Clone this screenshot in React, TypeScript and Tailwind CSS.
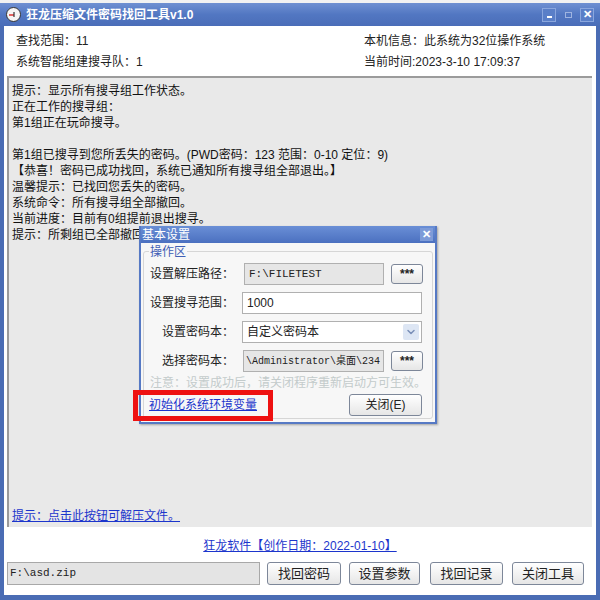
import { ChevronDown } from "lucide-react";

const font = "font-['Liberation_Sans','Noto_Sans_CJK_SC',sans-serif]";
const mono = "font-['Liberation_Mono','Noto_Sans_CJK_SC',monospace]";

const logLines = [
  "提示：显示所有搜寻组工作状态。",
  "正在工作的搜寻组：",
  "第1组正在玩命搜寻。",
  "",
  "第1组已搜寻到您所丢失的密码。(PWD密码：123 范围：0-10 定位：9)",
  "【恭喜！密码已成功找回，系统已通知所有搜寻组全部退出。】",
  "温馨提示：已找回您丢失的密码。",
  "系统命令：所有搜寻组全部撤回。",
  "当前进度：目前有0组提前退出搜寻。",
  "提示：所剩组已全部撤回。",
];

function SmallBtn({ label, className = "" }: { label: string; className?: string }) {
  return (
    <button
      className={`flex items-center justify-center rounded-[3px] border border-[#7d8799] bg-gradient-to-b from-white to-[#e6e6e6] text-[12px] text-[#222] ${className}`}
    >
      {label}
    </button>
  );
}

function SettingsDialog() {
  return (
    <div className="absolute left-[139px] top-[226px] flex h-[198px] w-[298px] flex-col border-[2px] border-t-0 border-[#5679c4] bg-[#f7f7f7] shadow-[1px_1px_2px_rgba(0,0,0,0.3)]">
      <div className="flex h-[17px] shrink-0 items-center justify-between bg-gradient-to-b from-[#6a8fd6] to-[#4b70c0] pl-[1px] pr-[2px] text-[12px] text-white">
        <span>基本设置</span>
        <span className="flex h-[13px] w-[13px] items-center justify-center bg-[#7d9bd8] text-[11px] font-bold leading-none">✕</span>
      </div>
      <div className="relative mx-[2px] mb-[3px] mt-[8px] flex-1 rounded-[3px] border border-[#d6d6d6] px-[6px] pt-[11px]">
        <span className="absolute -top-[8px] left-[5px] bg-[#f7f7f7] px-[1px] text-[12px] leading-[16px] text-[#3f5fb5]">操作区</span>
        <div className="flex flex-col gap-[7px] text-[12px] text-[#222]">
          <div className="flex h-[22px] items-center">
            <span className="w-[94px]">设置解压路径：</span>
            <div className={`flex h-[22px] w-[140px] items-center border border-[#b0b0b0] bg-[#e6e6e6] px-[4px] text-[11px] ${mono}`}>F:\FILETEST</div>
            <SmallBtn label="***" className="ml-[7px] h-[20px] w-[32px] font-bold text-[10px]" />
          </div>
          <div className="flex h-[22px] items-center">
            <span className="w-[92px]">设置搜寻范围：</span>
            <div className="flex h-[22px] w-[180px] items-center border border-[#b0b0b0] bg-white px-[4px]">1000</div>
          </div>
          <div className="flex h-[22px] items-center">
            <span className="w-[92px] pl-[12px]">设置密码本：</span>
            <div className="flex h-[22px] w-[180px] items-center justify-between border border-[#b0b0b0] bg-white pl-[4px] pr-[2px]">
              <span>自定义密码本</span>
              <span className="flex h-[16px] w-[16px] items-center justify-center rounded-[2px] bg-[#dde6f4] text-[#7a8fb8]">
                <ChevronDown size={12} strokeWidth={3} />
              </span>
            </div>
          </div>
          <div className="flex h-[22px] items-center">
            <span className="w-[93px] pl-[12px]">选择密码本：</span>
            <div className={`flex h-[22px] w-[141px] items-center overflow-hidden whitespace-nowrap border border-[#b0b0b0] bg-[#e6e6e6] px-[2px] text-[10px] ${mono}`}>\Administrator\桌面\234</div>
            <SmallBtn label="***" className="ml-[7px] h-[20px] w-[32px] font-bold text-[10px]" />
          </div>
        </div>
        <div className="mt-[3px] whitespace-nowrap text-[12px] leading-[16px] text-[#c3cbcb]">注意：设置成功后，请关闭程序重新启动方可生效。</div>
        <div className="mt-[3px] flex h-[22px] items-center justify-between">
          <div className="-ml-[17px] border-[5px] border-[#ee1111] px-[11px] py-[2px]">
            <span className="block text-[12px] leading-[17px] text-[#1c35cc] underline">初始化系统环境变量</span>
          </div>
          <SmallBtn label="关闭(E)" className="mr-[4px] h-[22px] w-[73px]" />
        </div>
      </div>
    </div>
  );
}

export default function App() {
  return (
    <div className={`relative h-[600px] w-[600px] overflow-hidden bg-white ${font}`}>
      <div className="h-[3px] bg-[#f2f2f2]" />
      <div className="flex h-[597px] flex-col">
        <div className="flex h-[23px] items-center justify-between bg-gradient-to-b from-[#6f90d2] via-[#5277c2] to-[#4a6db8] px-[6px]">
          <div className="flex items-center gap-[5px]">
            <svg width="15" height="15" viewBox="0 0 15 15">
              <circle cx="7.5" cy="7.5" r="7" fill="#f4f4f4" stroke="#333" strokeWidth="1" />
              <path d="M3 8 h5" stroke="#d33" strokeWidth="1.5" />
              <path d="M8 5 v5" stroke="#333" strokeWidth="1.2" />
            </svg>
            <span className="text-[12px] font-bold text-white">狂龙压缩文件密码找回工具v1.0</span>
          </div>
          <div className="flex items-center gap-[5px]">
            <span className="flex h-[14px] w-[14px] items-end justify-center border border-[#8aa6dd] bg-[#5a7fc8] pb-[3px]">
              <span className="h-[2px] w-[5px] bg-white" />
            </span>
            <span className="flex h-[14px] w-[14px] items-center justify-center">
              <span className="h-[6px] w-[7px] border border-[#9fb4e0]" />
            </span>
            <span className="flex h-[14px] w-[14px] items-center justify-center border border-[#8aa6dd] bg-[#5a7fc8] text-[11px] font-bold leading-none text-white">✕</span>
          </div>
        </div>
        <div className="flex flex-1 flex-col border-x-[4px] border-b-[5px] border-[#4a6cb4] bg-white">
          <div className="grid grid-cols-[348px_1fr] px-[12px] pt-[4px] text-[12px] text-[#222]">
            <div className="flex h-[21px] items-center">查找范围：11</div>
            <div className="flex h-[21px] items-center">本机信息：此系统为32位操作系统</div>
            <div className="flex h-[21px] items-center">系统智能组建搜寻队：1</div>
            <div className="flex h-[21px] items-center">当前时间:2023-3-10 17:09:37</div>
          </div>
          <div className="relative ml-[3px] mr-[4px] mt-[4px] flex h-[451px] flex-col justify-between border-l-[2px] border-t-[2px] border-[#9b9b9b] bg-[#e9e9e9] pl-[3px] pt-[5px] pb-[3px]">
            <div className="flex flex-col text-[12px] leading-[16px] text-[#111]">
              {logLines.map((l, i) => (
                <div key={i} className="h-[16px] whitespace-nowrap">{l}</div>
              ))}
            </div>
            <span className="text-[12px] leading-[16px] text-[#1c35cc] underline">提示：点击此按钮可解压文件。</span>
          </div>
          <div className="flex h-[35px] items-center justify-center pt-[2px]">
            <span className="text-[12px] text-[#1c35cc] underline">狂龙软件【创作日期：2022-01-10】</span>
          </div>
          <div className="flex h-[23px] items-center pl-[3px]">
            <div className={`flex h-[23px] w-[253px] items-center border border-[#a8a8a8] bg-[#e4e4e4] px-[2px] text-[11px] text-[#222] ${mono}`}>F:\asd.zip</div>
            <SmallBtn label="找回密码" className="ml-[7px] h-[23px] w-[74px] text-[13px]" />
            <SmallBtn label="设置参数" className="ml-[8px] h-[23px] w-[71px] text-[13px]" />
            <SmallBtn label="找回记录" className="ml-[10px] h-[23px] w-[73px] text-[13px]" />
            <SmallBtn label="关闭工具" className="ml-[9px] h-[23px] w-[72px] text-[13px]" />
          </div>
        </div>
      </div>
      <SettingsDialog />
    </div>
  );
}
